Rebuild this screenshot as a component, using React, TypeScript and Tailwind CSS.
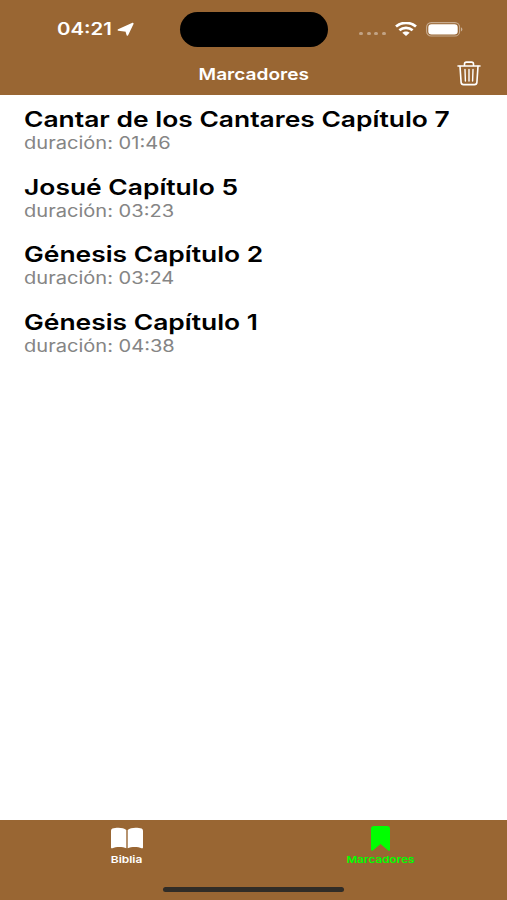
interface Bookmark {
  title: string
  duration: string
}

const bookmarks: Bookmark[] = [
  { title: 'Cantar de los Cantares Capítulo 7', duration: '01:46' },
  { title: 'Josué Capítulo 5', duration: '03:23' },
  { title: 'Génesis Capítulo 2', duration: '03:24' },
  { title: 'Génesis Capítulo 1', duration: '04:38' },
]

function StatusBar() {
  return (
    <div className="relative h-[53px]">
      <div className="flex h-[58px] items-center pl-[56.5px] pr-[44px]">
        <span className="mt-px w-[60px] whitespace-nowrap text-[17px] font-semibold leading-none">
          <span className="inline-block origin-left scale-x-[1.2]">04:21</span>
        </span>
        <svg className="h-[15px] w-[18px]" viewBox="0 0 18 15" fill="currentColor" stroke="currentColor" strokeWidth="1.6" strokeLinejoin="round">
          <path d="M15.8 1.6L10.4 13L9.2 9L1.4 8z" />
        </svg>
        <div className="ml-auto flex items-center">
          <div className="mr-[9px] mt-[9px] flex gap-[3.6px] opacity-40">
            <span className="h-[3px] w-[4px] rounded-full bg-white" />
            <span className="h-[3px] w-[4px] rounded-full bg-white" />
            <span className="h-[3px] w-[4px] rounded-full bg-white" />
            <span className="h-[3px] w-[4px] rounded-full bg-white" />
          </div>
          <svg className="mr-[9px] h-[14px] w-[22px]" viewBox="0 0 22 14" fill="none" stroke="currentColor" strokeWidth="2.7">
            <path d="M1 4.6C6.6-.3 15.4-.3 21 4.6" />
            <path d="M4.4 8.3c3.8-3.2 9.4-3.2 13.2 0" />
            <path d="M7.3 10.8c2.1-1.8 5.3-1.8 7.4 0L11 14z" fill="currentColor" stroke="none" />
          </svg>
          <svg className="h-[15px] w-[37px]" viewBox="0 0 37 15">
            <rect x="0.6" y="0.6" width="33" height="13.4" rx="4.6" fill="none" stroke="#fff" strokeOpacity="0.45" strokeWidth="1.1" />
            <rect x="2.3" y="2.2" width="29.4" height="10.2" rx="3.2" fill="#fff" />
            <path d="M35 5.2c1.9.8 1.9 3.4 0 4.2z" fill="#fff" fillOpacity="0.5" />
          </svg>
        </div>
      </div>
      <div className="absolute left-[180px] top-[12px] h-[35px] w-[148px] rounded-full bg-black" />
    </div>
  )
}

function TrashIcon() {
  return (
    <svg className="h-[25px] w-[24px]" viewBox="0 0 24 25" fill="none" stroke="currentColor" strokeWidth="1.6" strokeLinecap="round" strokeLinejoin="round">
      <path d="M1 5h22M7.5 4.8V3c0-1.2.7-1.9 1.9-1.9h5.2c1.2 0 1.9.7 1.9 1.9v1.8" />
      <path d="M3 5.2l1.1 16.2c.1 1.4 1 2.2 2.4 2.2h11c1.4 0 2.3-.8 2.4-2.2L21 5.2" />
      <path d="M8 8.4l.4 11.6M12 8.4v11.6M16 8.4l-.4 11.6" strokeWidth="1.4" />
    </svg>
  )
}

function BookmarkRow({ title, duration }: Bookmark) {
  return (
    <li className="h-[67.5px] whitespace-nowrap pl-[24px] pt-[11px]">
      <h2 className="text-[22px] font-semibold leading-[26px] text-black">
        <span className="inline-block origin-left scale-x-[1.2]">{title}</span>
      </h2>
      <p className="text-[17px] leading-[22px] text-[#858585]">
        <span className="inline-block origin-left scale-x-[1.18]">duración: {duration}</span>
      </p>
    </li>
  )
}

function TabBar() {
  return (
    <nav className="relative grid h-[80px] grid-cols-2 bg-[#996633] text-[9.5px] font-semibold leading-none">
      <div className="flex flex-col items-center pt-[7px] text-white">
        <svg className="h-[22px] w-[32px]" viewBox="0 0 32 22" fill="currentColor">
          <path d="M15.3 3v18.2C12 19.6 5 19.4 1.5 21.2.7 21.600 0 21.300 0 20.400V4.200C0 2.900.4 2.200 1.400 1.600 5 .2 12.500.1 15.300 3z" />
          <path d="M16.700 3v18.200c3.300-1.600 10.300-1.800 13.800 0 .8.4 1.500.1 1.500-.8V4.200c0-1.300-.4-2-1.400-2.600C27 .2 19.500.1 16.700 3z" />
        </svg>
        <span className="mt-[6px] scale-x-[1.26]">Biblia</span>
      </div>
      <div className="flex flex-col items-center pt-[6px] text-[#00ff00]">
        <svg className="h-[25px] w-[19px]" viewBox="0 0 19 25" fill="currentColor">
          <path d="M3 0h13c2 0 3 .9 3 2.7v21c0 1.200-.9 1.500-1.800.7L9.500 18l-7.700 6.400C.9 25.200 0 24.900 0 23.700v-21C0 .9 1 0 3 0z" />
        </svg>
        <span className="mt-[4px] scale-x-[1.24]">Marcadores</span>
      </div>
      <div className="absolute bottom-[8px] left-[163px] h-[5px] w-[181px] rounded-full bg-[#302c27]" />
    </nav>
  )
}

export default function App() {
  return (
    <div className="flex h-[900px] w-[507px] flex-col overflow-hidden bg-white font-['Inter',sans-serif]">
      <header className="h-[95px] bg-[#996633] text-white">
        <StatusBar />
        <div className="grid h-[42px] grid-cols-[1fr_auto_1fr] items-center pr-[26px]">
          <h1 className="col-start-2 ml-[26px] scale-x-[1.155] text-[16.5px] font-semibold leading-none">Marcadores</h1>
          <button className="-mt-[2px] justify-self-end" aria-label="Eliminar">
            <TrashIcon />
          </button>
        </div>
      </header>
      <ul className="flex-1">
        {bookmarks.map((bookmark) => (
          <BookmarkRow key={bookmark.title} {...bookmark} />
        ))}
      </ul>
      <TabBar />
    </div>
  )
}
